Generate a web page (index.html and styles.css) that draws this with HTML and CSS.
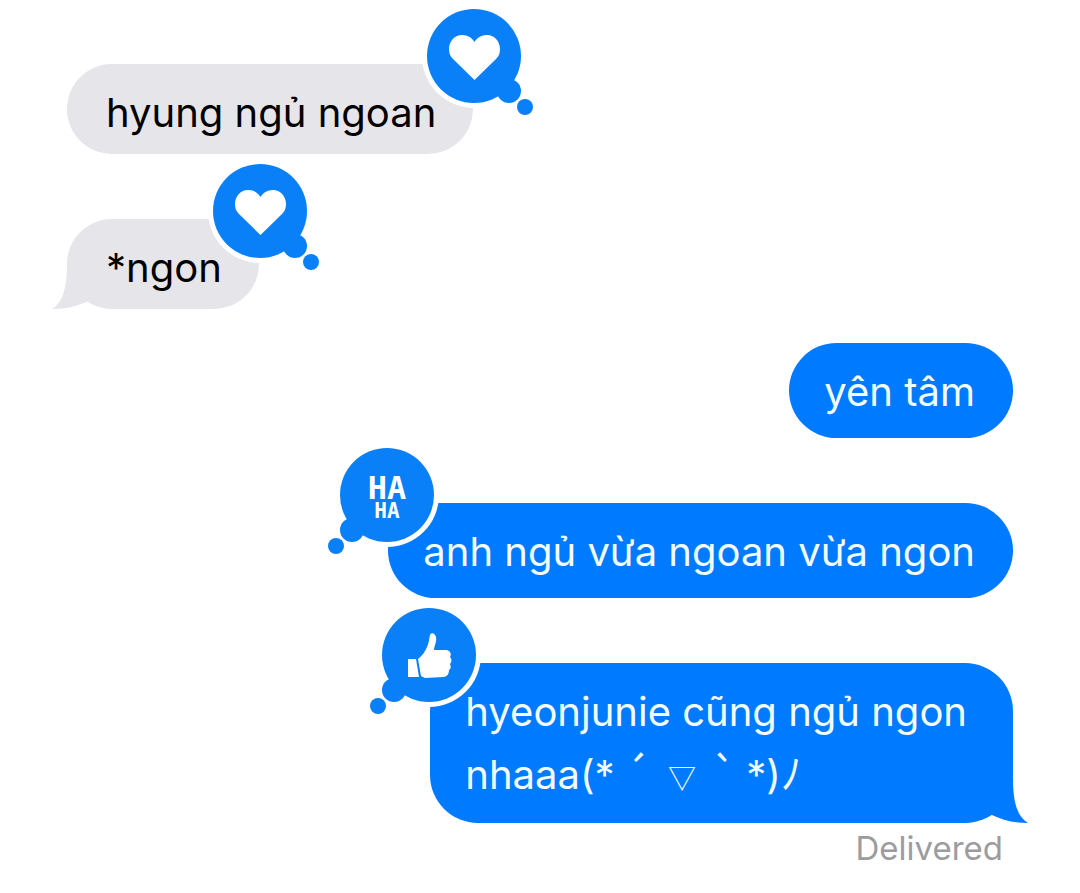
FILE: index.html
```
<!DOCTYPE html>
<html lang="vi">
<head>
<meta charset="UTF-8" />
<meta name="viewport" content="width=device-width, initial-scale=1" />
<title>Messages</title>
<link rel="stylesheet" href="styles.css">
</head>
<body>

<main class="chat">
  <div class="bubble received">
    hyung ngủ ngoan
    <svg class="reaction" viewBox="0 0 116 114" role="img" aria-label="Loved">
      <circle class="ring" cx="52" cy="52" r="52" />
      <circle cx="52" cy="52" r="47" />
      <circle cx="87" cy="87" r="12" />
      <circle cx="103" cy="103" r="8" />
      <path class="icon" d="M52.5 76 L31 55 C28 52 27 49 27 45 C27 37 33 31 40 31 C46 31 50 34 52.5 38 C55 34 59 31 65 31 C72 31 78 37 78 45 C78 49 77 52 74 55 Z" />
    </svg>
  </div>

  <div class="bubble received last">
    *ngon
    <svg class="tail" viewBox="0 0 60 45" aria-hidden="true">
      <path d="M15 0 C15 26 10 39 0 45 C14 45 26 42 36 37 L50 0 Z" />
    </svg>
    <svg class="reaction" viewBox="0 0 116 114" role="img" aria-label="Loved">
      <circle class="ring" cx="52" cy="52" r="52" />
      <circle cx="52" cy="52" r="47" />
      <circle cx="87" cy="87" r="12" />
      <circle cx="103" cy="103" r="8" />
      <path class="icon" d="M52.5 76 L31 55 C28 52 27 49 27 45 C27 37 33 31 40 31 C46 31 50 34 52.5 38 C55 34 59 31 65 31 C72 31 78 37 78 45 C78 49 77 52 74 55 Z" />
    </svg>
  </div>

  <div class="bubble sent first">yên tâm</div>

  <div class="bubble sent">
    anh ngủ vừa ngoan vừa ngon
    <svg class="reaction" viewBox="0 0 116 114" role="img" aria-label="Laughed">
      <circle class="ring" cx="64" cy="52" r="52" />
      <circle cx="64" cy="52" r="47" />
      <circle cx="29" cy="87" r="12" />
      <circle cx="13" cy="103" r="8" />
      <text class="haha" x="64" y="56">HA<tspan class="small" x="64" y="75">HA</tspan></text>
    </svg>
  </div>

  <div class="bubble sent last">
    hyeonjunie cũng ngủ ngon<br>nhaaa(*<span class="kaomoji"> ´ <span class="mouth">▽</span> ` </span>*)<span class="kaomoji">ﾉ</span>
    <svg class="tail" viewBox="0 0 60 45" aria-hidden="true">
      <path d="M45 0 C45 26 50 39 60 45 C46 45 34 42 24 37 L10 0 Z" />
    </svg>
    <svg class="reaction" viewBox="0 0 116 114" role="img" aria-label="Liked">
      <circle class="ring" cx="64" cy="52" r="52" />
      <circle cx="64" cy="52" r="47" />
      <circle cx="29" cy="87" r="12" />
      <circle cx="13" cy="103" r="8" />
      <path class="icon" d="M43 56 L51 56 L54 74 L43 74 Z" />
      <path class="icon" d="M53 56 C57 53 60 49 62 44 C64 40 64 36 65 32 C66 29 70 30 71 34 C72 39 69 43 69 47 L81 47 C85 47 87 51 85 54 C87 56 87 59 85 61 C86 64 86 66 84 67 C84 71 82 74 78 74 L60 75 L56 73 Z" />
    </svg>
  </div>

  <p class="status">Delivered</p>
</main>

</body>
</html>
```
FILE: styles.css
```
body {
  font-family: Inter, Roboto, "Noto Sans CJK JP", sans-serif;
  background: #fff;
  margin: 0;
}
.chat {
  display: flex;
  flex-direction: column;
  align-items: flex-start;
  gap: 65px;
  padding: 64px 67px 24px;
}
.bubble {
  position: relative;
  box-sizing: border-box;
  max-width: 80%;
  font-size: 40px;
  line-height: 63px;
  border-radius: 48px;
}
.received {
  background: #e5e5ea;
  color: #000;
  padding: 17px 37px 10px 39px;
}
.sent {
  align-self: flex-end;
  background: #007aff;
  color: #f2fdff;
  padding: 17px 38px 15px 35px;
}
.sent.first {
  margin-top: -31px;
}
.sent.last {
  padding: 17px 46px 17px 35px;
}
.tail {
  position: absolute;
  bottom: 0;
  width: 60px;
  height: 45px;
}
.received .tail {
  left: -15px;
  fill: #e5e5ea;
}
.sent .tail {
  right: -15px;
  fill: #007aff;
}
.reaction {
  position: absolute;
  top: -60px;
  width: 116px;
  height: 114px;
  fill: #0a80f8;
}
.received .reaction {
  right: -65px;
}
.sent .reaction {
  left: -65px;
}
.ring, .icon, .haha {
  fill: #fff;
}
.haha {
  font-family: "DejaVu Sans Mono", monospace;
  font-size: 32px;
  font-weight: bold;
  text-anchor: middle;
}
.haha .small {
  font-size: 21px;
}
.kaomoji {
  font-family: "Noto Sans CJK JP", sans-serif;
  font-size: 42px;
  line-height: 1;
}
.mouth {
  font-size: 28px;
  margin: 0 6px 0 9px;
}
.status {
  align-self: flex-end;
  margin: -60px 10px 0 0;
  color: #9c9c9e;
  font-size: 33px;
  line-height: 40px;
}
```
